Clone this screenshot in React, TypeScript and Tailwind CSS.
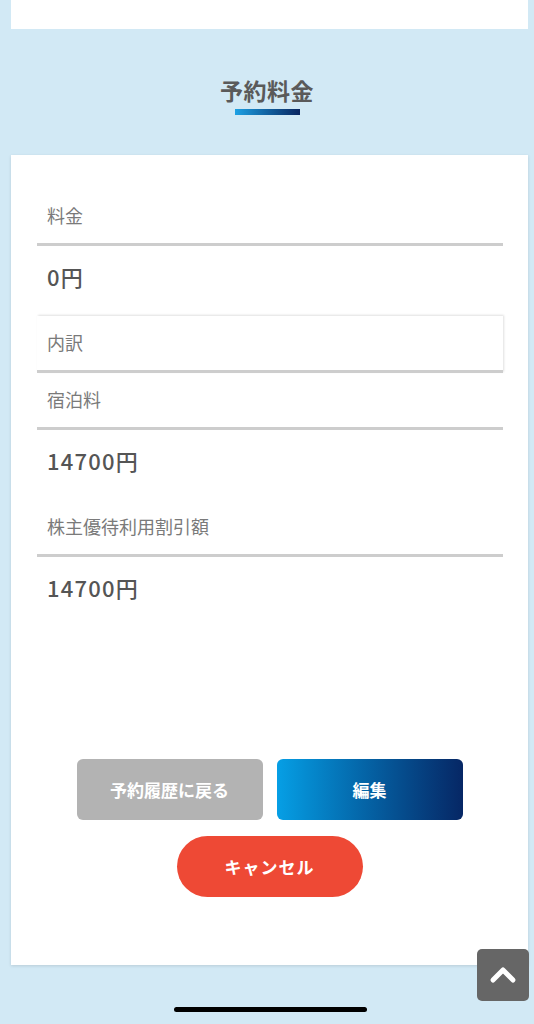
import { ChevronUp } from 'lucide-react';

const jp = '[font-family:"Noto_Sans_CJK_JP","Noto_Sans",sans-serif]';

function LabelRow({ label, boxed = false }: { label: string; boxed?: boolean }) {
  return (
    <div
      className={`h-[57px] flex items-center pl-[10px] border-b-[3px] border-[#cdcdcd] ${
        boxed ? 'shadow-[1px_-1px_2px_rgba(0,0,0,0.12)]' : ''
      }`}
    >
      <span className="text-[18px] text-[#7a7a7a] -mt-[2px]">{label}</span>
    </div>
  );
}

function ValueRow({ value }: { value: string }) {
  return (
    <div className="h-[70px] flex items-start pt-[14px] pl-[10px]">
      <span className="text-[22px] font-medium text-[#555] tracking-[1.2px]">{value}</span>
    </div>
  );
}

export default function App() {
  return (
    <div className={`min-h-[1024px] bg-[#d2e9f5] ${jp}`}>
      <div className="h-[29px] ml-[11px] mr-[6px] bg-white" />

      <div className="h-[126px] flex flex-col items-center pt-[46px]">
        <h2 className="text-[23px] font-bold text-[#5a5a5a] leading-[30px] tracking-[0.5px]">予約料金</h2>
        <div className="mt-[4px] w-[65px] h-[6px] bg-gradient-to-r from-[#1ea1e4] to-[#0a2660]" />
      </div>

      <div className="h-[810px] ml-[11px] mr-[6px] bg-white shadow-[0_1px_3px_rgba(0,0,0,0.12)] flex flex-col">
        <div className="mt-[34px] ml-[26px] mr-[25px]">
          <LabelRow label="料金" />
          <ValueRow value="0円" />
          <LabelRow label="内訳" boxed />
          <LabelRow label="宿泊料" />
          <ValueRow value="14700円" />
          <LabelRow label="株主優待利用割引額" />
          <ValueRow value="14700円" />
        </div>

        <div className="mt-[132px] flex flex-col items-center gap-[16px]">
          <div className="flex gap-[14px]">
            <button
              type="button"
              className="w-[186px] h-[61px] rounded-[6px] bg-[#b3b3b3] text-white text-[17px] font-bold"
            >
              予約履歴に戻る
            </button>
            <button
              type="button"
              className="w-[186px] h-[61px] rounded-[6px] bg-gradient-to-r from-[#069fe5] to-[#062765] text-white text-[17px] font-bold"
            >
              編集
            </button>
          </div>
          <button
            type="button"
            className="w-[186px] h-[61px] rounded-full bg-[#ee4935] text-white text-[17px] font-bold tracking-[1px]"
          >
            キャンセル
          </button>
        </div>
      </div>

      <button
        type="button"
        aria-label="ページトップへ"
        className="fixed left-[477px] top-[949px] w-[52px] h-[52px] rounded-[5px] bg-[#666] flex items-center justify-center"
      >
        <ChevronUp className="w-[40px] h-[40px] text-white" strokeWidth={3} />
      </button>

      <div className="fixed left-[174px] top-[1007px] w-[193px] h-[5px] rounded-full bg-black" />
    </div>
  );
}
